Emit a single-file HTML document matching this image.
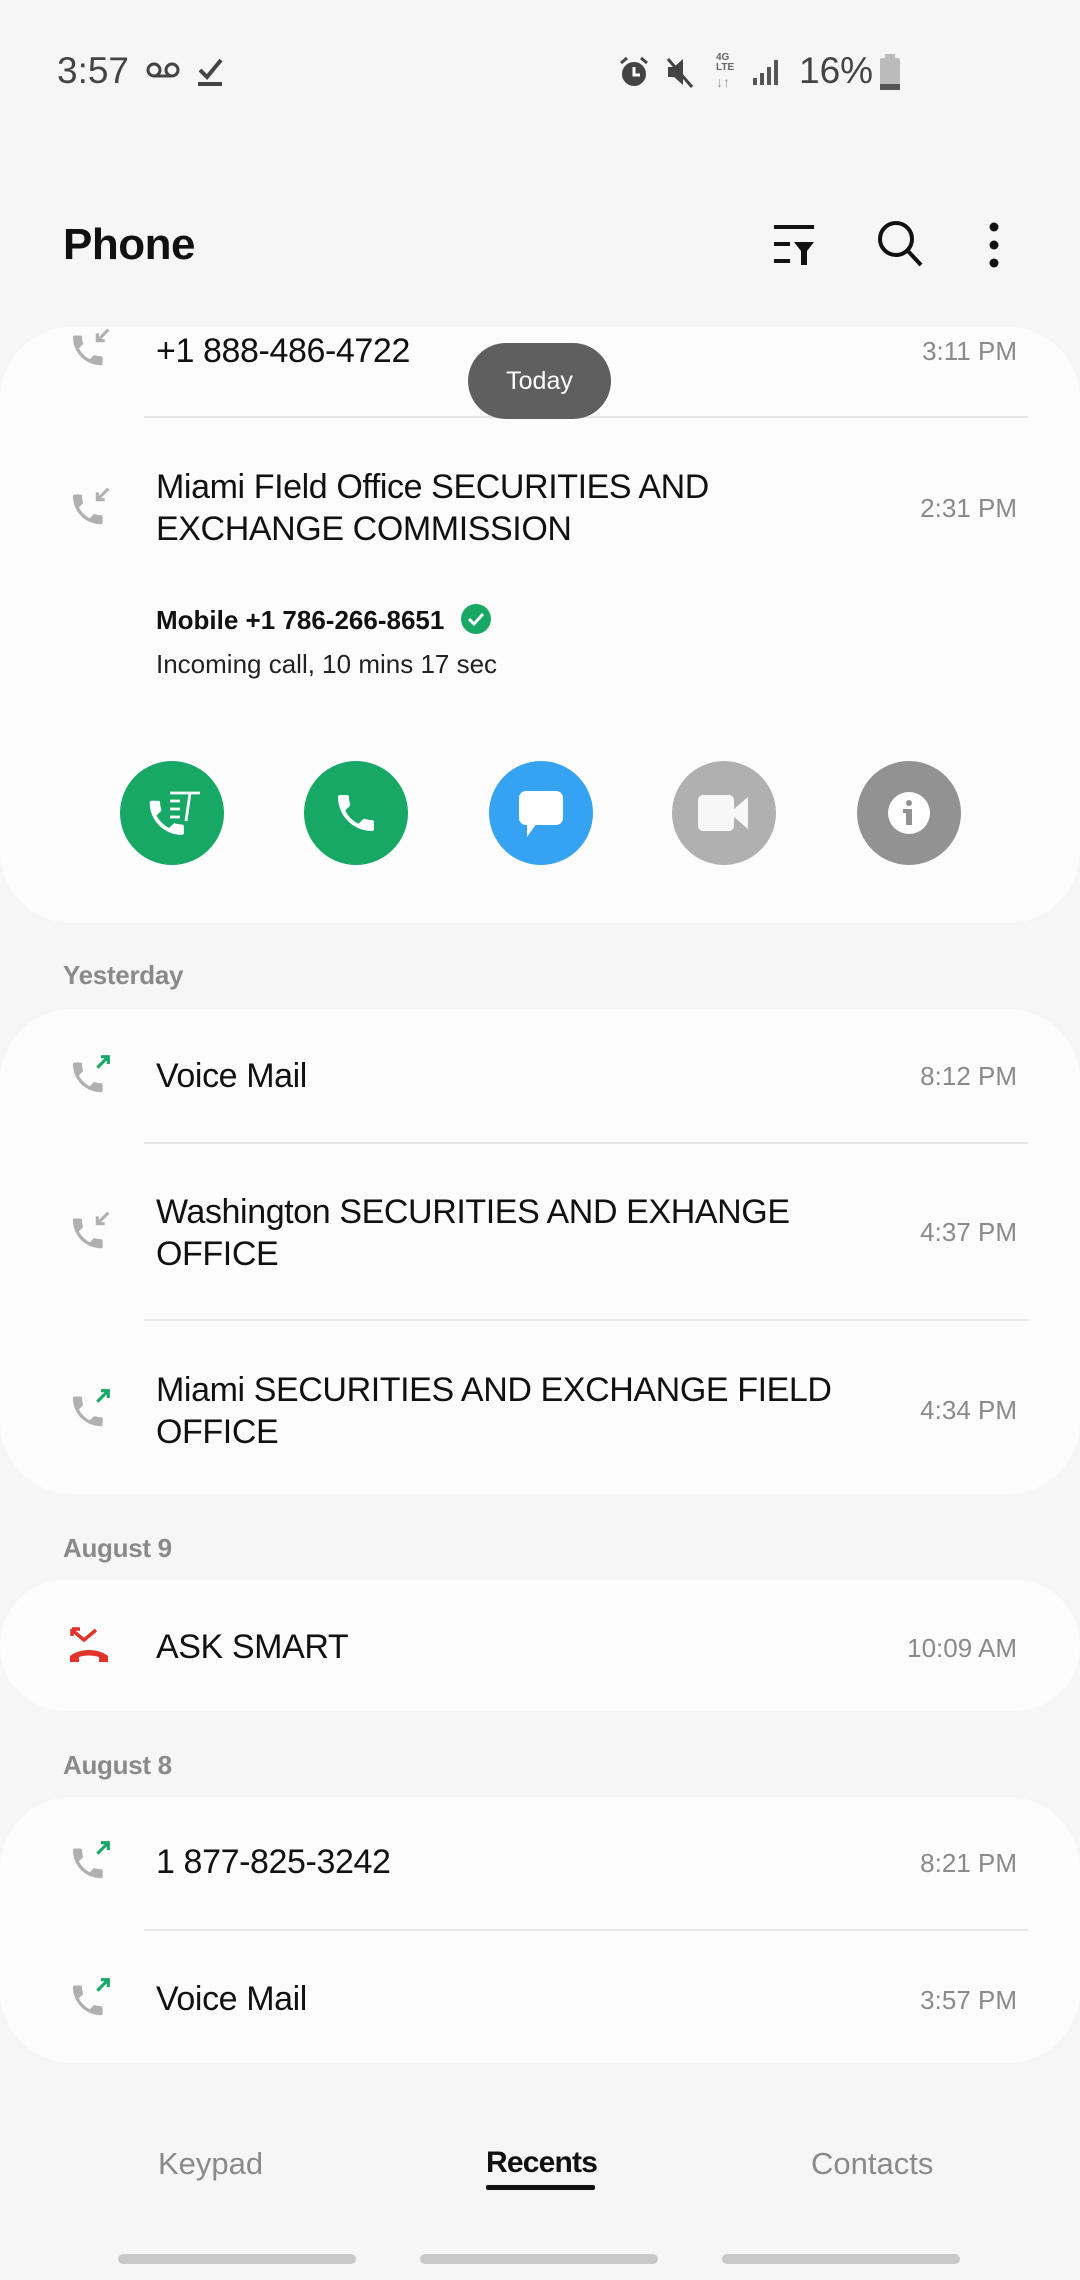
<!DOCTYPE html>
<html><head><meta charset="utf-8"><style>
*{margin:0;padding:0;box-sizing:border-box}
body{width:1080px;height:2280px;background:#f6f6f6;font-family:"Liberation Sans",sans-serif;position:relative;overflow:hidden;color:#111}
.a{position:absolute;white-space:nowrap}
.card{position:absolute;left:0;width:1080px;background:#fcfcfc;border-radius:72px}
.name{font-size:34px;letter-spacing:-0.4px;line-height:42px;color:#111}
.time{font-size:26px;color:#8a8a8a}
.hdr{font-size:26px;color:#8a8a8a;font-weight:bold;letter-spacing:-0.3px}
.div{position:absolute;left:144px;width:884px;height:2px;background:#e6e6e6}
.circ{position:absolute;width:104px;height:104px;border-radius:52px;top:761px}
.tab{font-size:31px;color:#8a8a8a;top:2146px}
.nav{position:absolute;top:2254px;height:10px;width:238px;border-radius:5px;background:#c9c9c9}
</style></head><body>
<svg width="0" height="0" style="position:absolute"><defs>
<path id="ph" d="M6.62 10.79c1.44 2.83 3.76 5.14 6.59 6.59l2.2-2.2c.27-.27.67-.36 1.020-.24 1.12.37 2.33.57 3.57.57.55 0 1 .45 1 1V20c0 .55-.45 1-1 1-9.39 0-17-7.61-17-17 0-.55.45-1 1-1h3.5c.55 0 1 .45 1 1 0 1.25.2 2.45.57 3.57.11.35.03.74-.25 1.02l-2.2 2.2z"/>
</defs></svg>

<!-- status bar -->
<div class="a" style="left:57px;top:50px;font-size:37px;color:#444">3:57</div>
<svg class="a" style="left:145px;top:60px" width="36" height="20"><circle cx="9" cy="10" r="6" fill="none" stroke="#444" stroke-width="3"/><circle cx="27" cy="10" r="6" fill="none" stroke="#444" stroke-width="3"/><line x1="9" y1="16" x2="27" y2="16" stroke="#444" stroke-width="3"/></svg>
<svg class="a" style="left:196px;top:56px" width="30" height="32"><path d="M4 14 L11 21 L25 4" fill="none" stroke="#444" stroke-width="4"/><rect x="2" y="26" width="24" height="4" fill="#444"/></svg>
<svg class="a" style="left:618px;top:55px" width="32" height="34"><circle cx="16" cy="19" r="12" fill="#444"/><path d="M16 12v8h6" stroke="#fff" stroke-width="3" fill="none"/><path d="M3 8l6-5M29 8l-6-5" stroke="#444" stroke-width="3"/></svg>
<svg class="a" style="left:664px;top:55px" width="32" height="34"><path d="M4 12h6l9-8v26l-9-8H4z" fill="#444"/><line x1="4" y1="4" x2="28" y2="32" stroke="#444" stroke-width="3"/></svg>
<div class="a" style="left:716px;top:53px;font-size:10px;font-weight:bold;color:#666;line-height:10px">4G<br>LTE</div>
<div class="a" style="left:716px;top:74px;font-size:14px;color:#999">↓↑</div>
<svg class="a" style="left:752px;top:56px" width="32" height="30"><rect x="1" y="22" width="4" height="7" fill="#555"/><rect x="8" y="17" width="4" height="12" fill="#555"/><rect x="15" y="11" width="4" height="18" fill="#555"/><rect x="22" y="4" width="4" height="25" fill="#555"/></svg>
<div class="a" style="left:799px;top:50px;font-size:37px;color:#444">16%</div>
<svg class="a" style="left:879px;top:54px" width="22" height="36"><rect x="6" y="0" width="10" height="4" fill="#bbb"/><rect x="1" y="4" width="20" height="32" rx="2" fill="#bbb"/><rect x="1" y="30" width="20" height="6" fill="#555"/></svg>

<!-- header -->
<div class="a" style="left:63px;top:220px;font-size:44px;font-weight:bold;color:#111;letter-spacing:-0.5px">Phone</div>
<svg class="a" style="left:772px;top:222px" width="46" height="46"><rect x="2" y="3" width="40" height="4" fill="#111"/><rect x="2" y="20" width="16" height="4" fill="#111"/><rect x="2" y="37" width="16" height="4" fill="#111"/><path d="M22 20h20l-7 9v14h-6V29z" fill="#111"/></svg>
<svg class="a" style="left:876px;top:219px" width="50" height="50"><circle cx="20" cy="20" r="16" fill="none" stroke="#111" stroke-width="4"/><line x1="31" y1="31" x2="45" y2="46" stroke="#111" stroke-width="4"/></svg>
<svg class="a" style="left:988px;top:222px" width="12" height="46"><circle cx="6" cy="5" r="4.5" fill="#111"/><circle cx="6" cy="23" r="4.5" fill="#111"/><circle cx="6" cy="41" r="4.5" fill="#111"/></svg>

<!-- card 1 -->
<div class="card" style="top:327px;height:596px"></div>
<svg class="a" style="left:68px;top:326px" width="44" height="44" viewBox="0 0 24 24"><use href="#ph" fill="#b0b0b0" transform="translate(0,2.5) scale(0.9)"/><path d="M22 2l-6 6M16 4v4h4" stroke="#b0b0b0" stroke-width="1.7" fill="none"/></svg>
<div class="a name" style="left:156px;top:330px">+1 888-486-4722</div>
<div class="a time" style="right:63px;top:336px">3:11 PM</div>
<div class="div" style="top:416px"></div>
<div class="a" style="left:468px;top:343px;width:143px;height:76px;border-radius:38px;background:#5f5f5f;color:#fff;font-size:25px;text-align:center;line-height:76px">Today</div>

<svg class="a" style="left:68px;top:485px" width="44" height="44" viewBox="0 0 24 24"><use href="#ph" fill="#b0b0b0" transform="translate(0,2.5) scale(0.9)"/><path d="M22 2l-6 6M16 4v4h4" stroke="#b0b0b0" stroke-width="1.7" fill="none"/></svg>
<div class="a name" style="left:156px;top:466px">Miami FIeld Office SECURITIES AND<br>EXCHANGE COMMISSION</div>
<div class="a time" style="right:63px;top:493px">2:31 PM</div>
<div class="a" style="left:156px;top:605px;font-size:26px;font-weight:bold">Mobile +1 786-266-8651</div>
<svg class="a" style="left:460px;top:603px" width="32" height="32"><circle cx="16" cy="16" r="15" fill="#17a865"/><path d="M9 16l5 5 9-10" stroke="#fff" stroke-width="3" fill="none"/></svg>
<div class="a" style="left:156px;top:649px;font-size:26px;color:#222">Incoming call, 10 mins 17 sec</div>

<div class="circ" style="left:120px;background:#17a865"></div>
<svg class="a" style="left:140px;top:781px" width="64" height="64" viewBox="0 0 32 32"><use href="#ph" fill="#fff" transform="translate(2,7) scale(0.95)"/><path d="M15 6h6M15 10h5M15 14h5M15 18h5M21 6h9M25 6l-2 14" stroke="#fff" stroke-width="1.4" fill="none"/></svg>
<div class="circ" style="left:304px;background:#17a865"></div>
<svg class="a" style="left:332px;top:789px" width="48" height="48" viewBox="0 0 24 24"><use href="#ph" fill="#fff"/></svg>
<div class="circ" style="left:489px;background:#35a3f1"></div>
<svg class="a" style="left:517px;top:789px" width="48" height="50"><rect x="2" y="2" width="44" height="34" rx="7" fill="#fff"/><path d="M10 34v14l10-14z" fill="#fff"/></svg>
<div class="circ" style="left:672px;background:#b0b0b0"></div>
<svg class="a" style="left:698px;top:793px" width="54" height="40"><rect x="0" y="2" width="36" height="36" rx="5" fill="#f7f7f7"/><path d="M36 16l14-12v32l-14-12z" fill="#f7f7f7"/></svg>
<div class="circ" style="left:857px;background:#929292"></div>
<svg class="a" style="left:887px;top:791px" width="44" height="44"><circle cx="22" cy="22" r="21" fill="#fff"/><circle cx="22" cy="12" r="3" fill="#929292"/><rect x="19" y="18" width="6" height="16" fill="#929292"/><rect x="16" y="18" width="6" height="4" fill="#929292"/></svg>

<!-- yesterday -->
<div class="a hdr" style="left:63px;top:960px">Yesterday</div>
<div class="card" style="top:1009px;height:485px"></div>
<svg class="a" style="left:68px;top:1053px" width="44" height="44" viewBox="0 0 24 24"><use href="#ph" fill="#b0b0b0" transform="translate(0,2.5) scale(0.9)"/><path d="M16 8l6-6M18 2h4v4" stroke="#17a865" stroke-width="1.7" fill="none"/></svg>
<div class="a name" style="left:156px;top:1055px">Voice Mail</div>
<div class="a time" style="right:63px;top:1061px">8:12 PM</div>
<div class="div" style="top:1142px"></div>
<svg class="a" style="left:68px;top:1209px" width="44" height="44" viewBox="0 0 24 24"><use href="#ph" fill="#b0b0b0" transform="translate(0,2.5) scale(0.9)"/><path d="M22 2l-6 6M16 4v4h4" stroke="#b0b0b0" stroke-width="1.7" fill="none"/></svg>
<div class="a name" style="left:156px;top:1191px">Washington SECURITIES AND EXHANGE<br>OFFICE</div>
<div class="a time" style="right:63px;top:1217px">4:37 PM</div>
<div class="div" style="top:1319px"></div>
<svg class="a" style="left:68px;top:1387px" width="44" height="44" viewBox="0 0 24 24"><use href="#ph" fill="#b0b0b0" transform="translate(0,2.5) scale(0.9)"/><path d="M16 8l6-6M18 2h4v4" stroke="#17a865" stroke-width="1.7" fill="none"/></svg>
<div class="a name" style="left:156px;top:1369px">Miami SECURITIES AND EXCHANGE FIELD<br>OFFICE</div>
<div class="a time" style="right:63px;top:1395px">4:34 PM</div>

<!-- August 9 -->
<div class="a hdr" style="left:63px;top:1533px">August 9</div>
<div class="card" style="top:1580px;height:131px;border-radius:65px"></div>
<svg class="a" style="left:68px;top:1626px" width="42" height="40"><path d="M4 4l12 10 12-10" stroke="#e0332a" stroke-width="3.5" fill="none"/><path d="M4 3h8M4 3v7" stroke="#e0332a" stroke-width="3.5"/><path d="M2 36v-6c10-8 28-8 38 0v6h-9v-5c-6-2-14-2-20 0v5z" fill="#e0332a"/></svg>
<div class="a name" style="left:156px;top:1626px">ASK SMART</div>
<div class="a time" style="right:63px;top:1633px">10:09 AM</div>

<!-- August 8 -->
<div class="a hdr" style="left:63px;top:1750px">August 8</div>
<div class="card" style="top:1797px;height:266px"></div>
<svg class="a" style="left:68px;top:1839px" width="44" height="44" viewBox="0 0 24 24"><use href="#ph" fill="#b0b0b0" transform="translate(0,2.5) scale(0.9)"/><path d="M16 8l6-6M18 2h4v4" stroke="#17a865" stroke-width="1.7" fill="none"/></svg>
<div class="a name" style="left:156px;top:1841px">1 877-825-3242</div>
<div class="a time" style="right:63px;top:1848px">8:21 PM</div>
<div class="div" style="top:1929px"></div>
<svg class="a" style="left:68px;top:1976px" width="44" height="44" viewBox="0 0 24 24"><use href="#ph" fill="#b0b0b0" transform="translate(0,2.5) scale(0.9)"/><path d="M16 8l6-6M18 2h4v4" stroke="#17a865" stroke-width="1.7" fill="none"/></svg>
<div class="a name" style="left:156px;top:1978px">Voice Mail</div>
<div class="a time" style="right:63px;top:1985px">3:57 PM</div>

<!-- tabs -->
<div class="a tab" style="left:158px">Keypad</div>
<div class="a tab" style="left:486px;color:#111;font-weight:bold;letter-spacing:-0.8px;font-size:30px">Recents</div>
<div class="a" style="left:486px;top:2185px;width:109px;height:5px;background:#111;border-radius:2px"></div>
<div class="a tab" style="left:811px">Contacts</div>

<div class="nav" style="left:118px"></div>
<div class="nav" style="left:420px"></div>
<div class="nav" style="left:722px"></div>
</body></html>
